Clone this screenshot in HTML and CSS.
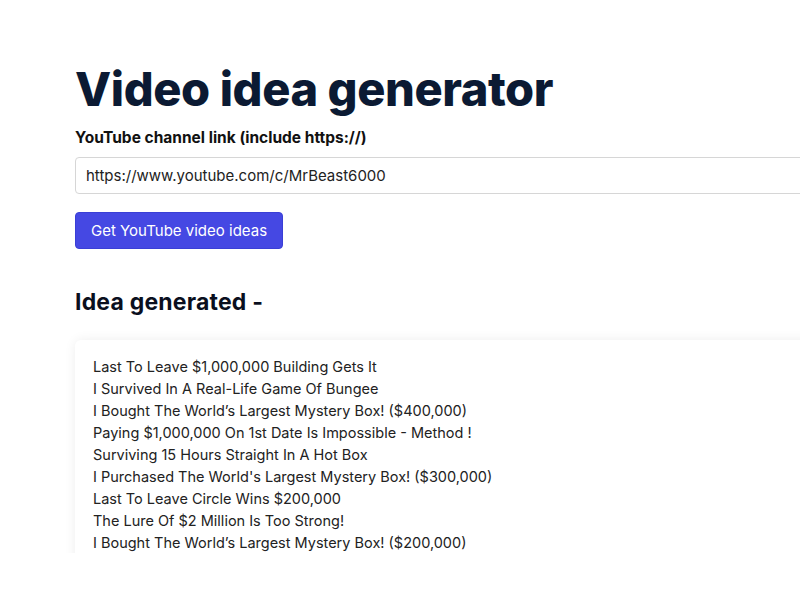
FILE: index.html
```html
<!DOCTYPE html>
<html>
<head>
    <title>Video idea generator</title>
    <link rel="stylesheet" href="styles.css">
</head>
<body>
    <div class="page">
        <main class="main">
            <h1 class="title">Video idea generator</h1>

            <form class="form">
                <label class="label" for="channel">YouTube channel link (include https://)</label>
                <input class="field" id="channel" type="text" name="channel" value="https://www.youtube.com/c/MrBeast6000">
                <button class="btn" type="submit">Get YouTube video ideas</button>
            </form>

            <h2 class="subtitle">Idea generated -</h2>

            <div class="ideas">
                <p>Last To Leave $1,000,000 Building Gets It</p>
                <p>I Survived In A Real-Life Game Of Bungee</p>
                <p>I Bought The World’s Largest Mystery Box! ($400,000)</p>
                <p>Paying $1,000,000 On 1st Date Is Impossible - Method !</p>
                <p>Surviving 15 Hours Straight In A Hot Box</p>
                <p>I Purchased The World's Largest Mystery Box! ($300,000)</p>
                <p>Last To Leave Circle Wins $200,000</p>
                <p>The Lure Of $2 Million Is Too Strong!</p>
                <p>I Bought The World’s Largest Mystery Box! ($200,000)</p>
            </div>
        </main>
    </div>
</body>
</html>
```

FILE: styles.css
```css
html, body {
    margin: 0;
    background: #fff;
    overflow: hidden;
}

body {
    font-family: Inter, "Noto Sans", sans-serif;
    color: #111;
}

.page {
    height: 553px;
    overflow: hidden;
}

.main {
    width: 800px;
    margin-left: 75px;
    padding-top: 59px;
}

.title {
    margin: 0;
    font-size: 47px;
    font-weight: 800;
    letter-spacing: -0.4px;
    color: #0b1a33;
    line-height: 60px;
}

.form {
    display: flex;
    flex-direction: column;
    align-items: flex-start;
}

.label {
    margin-top: 9px;
    font-size: 15.5px;
    font-weight: 700;
    color: #111;
    line-height: 20px;
}

.field {
    box-sizing: border-box;
    width: 100%;
    height: 37px;
    margin-top: 9px;
    padding: 0 10px;
    border: 1px solid #d6d6d6;
    border-radius: 4px;
    font-family: inherit;
    font-size: 15px;
    color: #222;
}

.btn {
    margin-top: 18px;
    height: 37px;
    padding: 0 15px;
    border: 1px solid #3a3fd6;
    border-radius: 4px;
    background: #4548e3;
    color: #fff;
    font-family: inherit;
    font-size: 15px;
    cursor: pointer;
}

.subtitle {
    margin: 38px 0 0;
    font-size: 23px;
    font-weight: 700;
    letter-spacing: 0.2px;
    color: #0a0f1e;
    line-height: 30px;
}

.ideas {
    margin-top: 23px;
    padding: 16px 18px 30px;
    border-radius: 6px;
    box-shadow: 0 0 12px rgba(0, 0, 0, 0.07);
}

.ideas p {
    margin: 0;
    font-size: 14.5px;
    line-height: 22px;
    color: #222;
}
```
